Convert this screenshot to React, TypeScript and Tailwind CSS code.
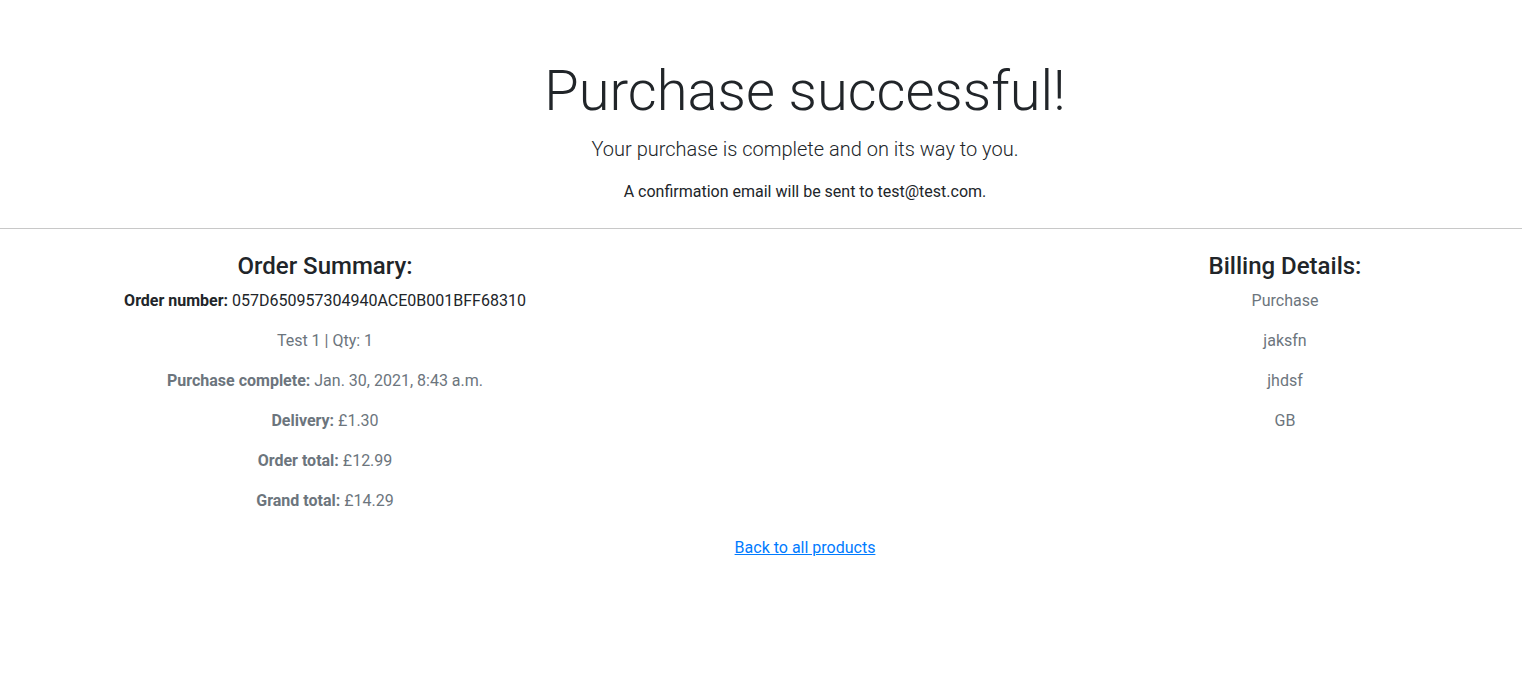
export default function App() {
  const summary = [
    { label: 'Purchase complete:', value: 'Jan. 30, 2021, 8:43 a.m.' },
    { label: 'Delivery:', value: '£1.30' },
    { label: 'Order total:', value: '£12.99' },
    { label: 'Grand total:', value: '£14.29' },
  ]

  const billing = ['Purchase', 'jaksfn', 'jhdsf', 'GB']

  return (
    <div className="min-h-screen bg-white font-['Roboto',sans-serif] text-[#212529] text-base leading-6">
      {/* Header */}
      <div className="pl-[88px] pt-[58px] text-center">
        <h1 className="text-[56px] font-light leading-[1.2]">Purchase successful!</h1>
        <p className="mt-[9px] text-xl font-light leading-[30px]">Your purchase is complete and on its way to you.</p>
        <p className="mt-4">A confirmation email will be sent to test@test.com.</p>
      </div>

      <hr className="mt-6 border-t border-[#c8c8c8]" />

      <div className="pl-[85px]">
        <div className="grid grid-cols-[480px_1fr_474px] pt-[23px] text-center">
          {/* Order Summary */}
          <div>
            <h4 className="mb-2 text-2xl font-medium leading-[1.2]">Order Summary:</h4>
            <p className="mb-4">
              <strong className="font-bold">Order number:</strong> 057D650957304940ACE0B001BFF68310
            </p>
            <p className="mb-4 text-[#6c757d]">Test 1 | Qty: 1</p>
            {summary.map((row, i) => (
              <p key={i} className="mb-4 text-[#6c757d]">
                <strong className="font-bold">{row.label}</strong> {row.value}
              </p>
            ))}
          </div>

          <div />

          {/* Billing Details */}
          <div>
            <h4 className="mb-2 text-2xl font-medium leading-[1.2]">Billing Details:</h4>
            {billing.map((line, i) => (
              <p key={i} className="mb-4 text-[#6c757d]">{line}</p>
            ))}
          </div>
        </div>

        <div className="mt-[7px] pl-[3px] text-center">
          <a href="#" className="text-[#007bff] underline">Back to all products</a>
        </div>
      </div>
    </div>
  )
}
